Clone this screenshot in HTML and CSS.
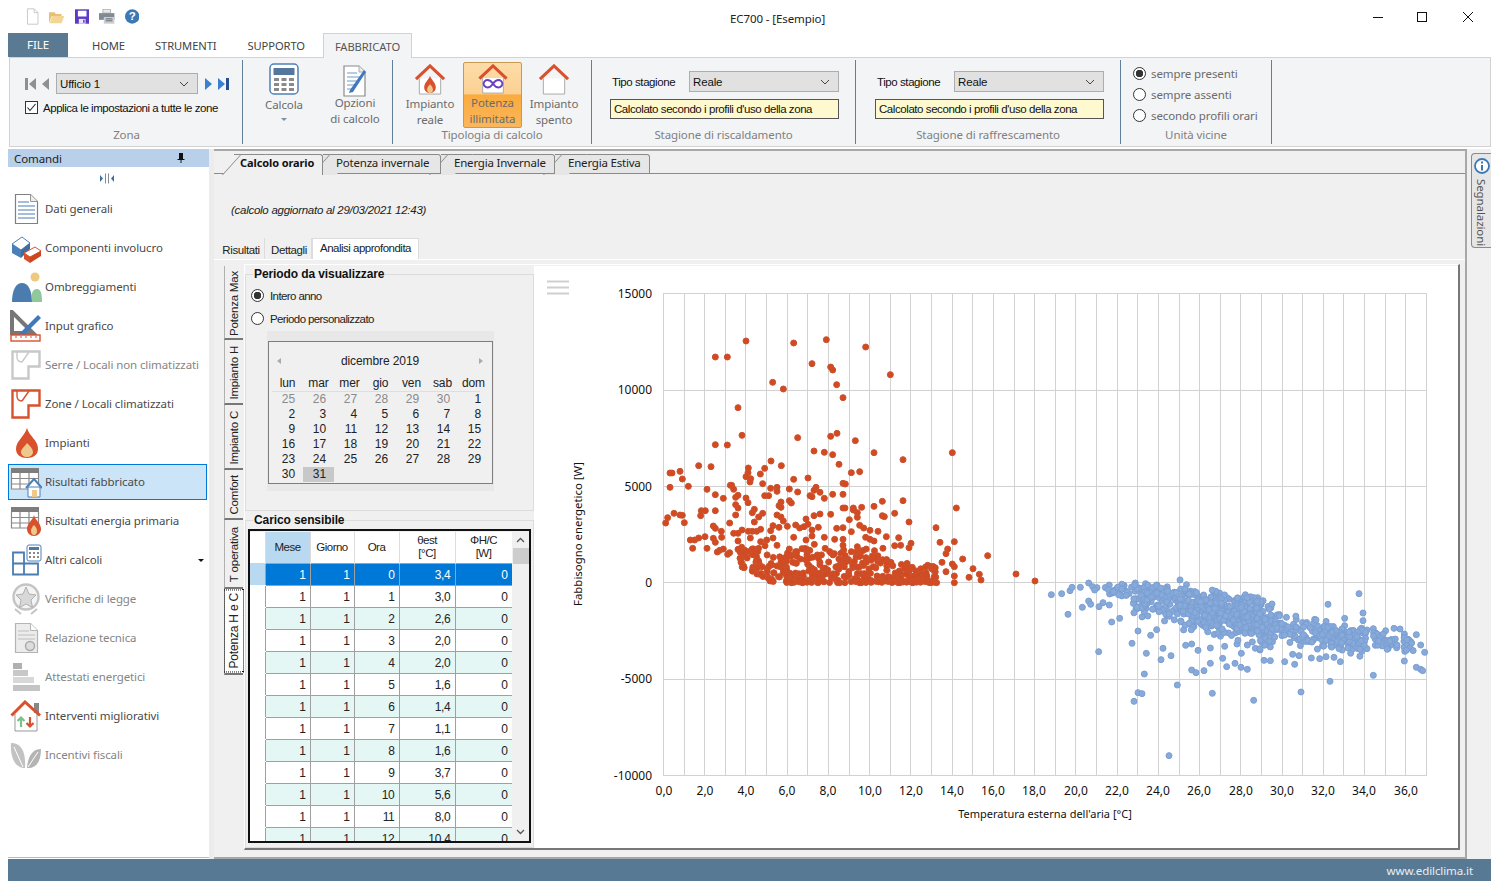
FILE: index.html
```html
<!DOCTYPE html>
<html lang="it">
<head>
<meta charset="utf-8">
<title>EC700 - [Esempio]</title>
<link rel="stylesheet" href="styles.css">
</head>
<body>
<svg class="defs" width="0" height="0" aria-hidden="true">
  <defs>
    <symbol id="i-house" viewBox="0 0 32 32">
      <path d="M5 15v16h22V15" fill="#fff" stroke="#a8a8a8" stroke-width="1"/>
      <path d="M1.500 15.500 16 2l14.500 13.500" fill="none" stroke="#d9502c" stroke-width="3.200"/>
    </symbol>
    <symbol id="i-plan" viewBox="0 0 30 30">
      <path d="M1.500 1.500h27v15h-11v12h-16z" fill="none" stroke="currentColor" stroke-width="2.400"/>
      <path d="M6 2v5c0 3 2 5 5 5h0M11 12 18 2" fill="none" stroke="currentColor" stroke-width="1.400"/>
    </symbol>
    <symbol id="i-table" viewBox="0 0 30 24">
      <rect x="1" y="1" width="28" height="5" fill="#7d7d7d"/>
      <path d="M1.500 6v16h27V6M1.500 11.500h27M1.500 17h27M10 6v16M19 6v16" fill="#fff" stroke="#8a8a8a" stroke-width="1.200"/>
    </symbol>
  </defs>
</svg>
<div class="app">
  <header class="titlebar">
    <div class="qat">
      <svg class="qat-icon" width="14" height="17" viewBox="0 0 14 17"><path d="M1.500 .5h7l4 4v12h-11z" fill="#fff" stroke="#c8c8c8"/><path d="M8.500 .5v4h4" fill="none" stroke="#c8c8c8"/></svg>
      <svg class="qat-icon" width="16" height="14" viewBox="0 0 16 14"><path d="M0 2h6l1 2h6v2H3L0 13z" fill="#e9bf73"/><path d="M3.500 6H16l-3 7.500H.5z" fill="#f3d595"/></svg>
      <svg class="qat-icon" width="15" height="15" viewBox="0 0 15 15"><path d="M0 0h15v15H0z" fill="#5b3bc4"/><path d="M3 1.500h9v6H3z" fill="#fff"/><path d="M4 10h7v5H4z" fill="#e9e6f7"/><path d="M8.500 11h1.500v3H8.500z" fill="#5b3bc4"/></svg>
      <svg class="qat-icon" width="16" height="15" viewBox="0 0 16 15"><path d="M4 0h8v4H4z" fill="#e8e8e8" stroke="#888" stroke-width=".6"/><path d="M0 4h16v7H0z" fill="#7f8a94"/><path d="M5 8h11v7H5z" fill="#c9ced3"/><path d="M7 10h7M7 12h7" stroke="#666" stroke-width="1"/></svg>
      <svg class="qat-icon" width="15" height="15" viewBox="0 0 15 15"><circle cx="7.500" cy="7.500" r="7.500" fill="#3c79b4"/><text x="7.500" y="11.600" text-anchor="middle" class="qat-help">?</text></svg>
    </div>
    <div class="app-title">EC700 - [Esempio]</div>
    <div class="winctl">
      <svg width="12" height="12" viewBox="0 0 12 12"><path d="M1 6.500h10" stroke="#111"/></svg>
      <svg width="12" height="12" viewBox="0 0 12 12"><rect x="1.500" y="1.500" width="9" height="9" fill="none" stroke="#111"/></svg>
      <svg class="win-close" width="12" height="12" viewBox="0 0 12 12"><path d="M1 1l10 10M11 1 1 11" stroke="#111"/></svg>
    </div>
  </header>

  <nav class="ribbon-tabs">
    <div class="file-tab">FILE</div>
    <div class="rtab rtab-home">HOME</div>
    <div class="rtab rtab-tools">STRUMENTI</div>
    <div class="rtab rtab-support">SUPPORTO</div>
    <div class="rtab rtab-active">FABBRICATO</div>
  </nav>

  <section class="ribbon">
    <div class="rgroup g-zona">
      <div class="rgroup-body zona-body">
        <div class="zona-row">
          <svg class="nav-l" width="26" height="12" viewBox="0 0 26 12"><path d="M0 0h3v12H0zM11 0v12L4 6zM24 0v12l-7-6z" fill="#909090"/></svg>
          <div class="combo combo-zona"><span>Ufficio 1</span><svg width="10" height="6" viewBox="0 0 10 6"><path d="M1 1l4 4 4-4" fill="none" stroke="#444"/></svg></div>
          <svg class="nav-r" width="25" height="12" viewBox="0 0 25 12"><path d="M1 0v12l7-6zM14 0v12l7-6z" fill="#3a7fd0"/><path d="M22 0h3v12h-3z" fill="#2a4f8f"/></svg>
        </div>
        <label class="apply-row">
          <svg width="13" height="13" viewBox="0 0 13 13"><rect x=".5" y=".5" width="12" height="12" fill="#fff" stroke="#333"/><path d="M2.500 6.500 5 9.500l5.500-6.500" fill="none" stroke="#222" stroke-width="1.100"/></svg>
          <span>Applica le impostazioni a tutte le zone</span>
        </label>
      </div>
      <div class="rgroup-label">Zona</div>
    </div>

    <div class="rgroup g-calc">
      <div class="rgroup-body calc-body">
        <div class="bigbtn btn-calcola">
          <svg width="30" height="32" viewBox="0 0 30 32"><rect x="1" y="1" width="28" height="30" rx="4" fill="#fff" stroke="#4f80b8" stroke-width="1.500"/><rect x="4.500" y="5" width="21" height="7" fill="#53789c"/><path d="M5 15h5v3H5zM12.500 15h5v3h-5zM20 15h5v3h-5zM5 20h5v3H5zM12.500 20h5v3h-5zM20 20h5v3h-5zM5 25h5v3H5zM12.500 25h5v3h-5zM20 25h5v3h-5z" fill="#8a8a8a"/></svg>
          <span class="btn-text">Calcola</span>
          <span class="caret"></span>
        </div>
        <div class="bigbtn btn-opzioni">
          <svg width="24" height="32" viewBox="0 0 24 32"><path d="M1 1h15l6 6v24H1z" fill="#fff" stroke="#8a8a8a" stroke-width="1.200"/><path d="M16 1v6h6" fill="#eee" stroke="#aaa"/><path d="M4 8h10M4 12h14M4 16h12M4 20h9M4 24h6" stroke="#6f9bd1" stroke-width="1.200"/><path d="M7 25 21 5l2 2-13 20-4 1z" fill="#3e79bf"/></svg>
          <span class="btn-text">Opzioni<br>di calcolo</span>
        </div>
      </div>
    </div>

    <div class="rgroup g-tipo">
      <div class="rgroup-body tipo-body">
        <div class="housebtn">
          <svg width="32" height="32" viewBox="0 0 32 32"><use href="#i-house"/><path d="M16 12c1 4 6 7 6 12 0 4-3 6-6 6s-6-2-6-6c0-5 5-8 6-12z" fill="#d9502c"/><path d="M16 21c2 2 3 4 3 5.500S18 30 16 30s-3-2-3-3.500S14 23 16 21z" fill="#efc88d"/></svg>
          <span class="btn-text">Impianto<br>reale</span>
        </div>
        <div class="housebtn housebtn-on">
          <svg width="32" height="32" viewBox="0 0 32 32"><use href="#i-house"/><path d="M16 21c-2-3-4-4-6-4s-4 2-4 4 2 4 4 4 4-1 6-4c2 3 4 4 6 4s4-2 4-4-2-4-4-4-4 1-6 4z" fill="none" stroke="#6a3fc4" stroke-width="2"/></svg>
          <span class="btn-text">Potenza<br>illimitata</span>
        </div>
        <div class="housebtn">
          <svg width="32" height="32" viewBox="0 0 32 32"><use href="#i-house"/></svg>
          <span class="btn-text">Impianto<br>spento</span>
        </div>
      </div>
      <div class="rgroup-label">Tipologia di calcolo</div>
    </div>

    <div class="rgroup g-risc">
      <div class="rgroup-body season-body">
        <div class="season-row">
          <span class="season-name">Tipo stagione</span>
          <div class="combo combo-season"><span>Reale</span><svg width="10" height="6" viewBox="0 0 10 6"><path d="M1 1l4 4 4-4" fill="none" stroke="#444"/></svg></div>
        </div>
        <div class="note">Calcolato secondo i profili d'uso della zona</div>
      </div>
      <div class="rgroup-label">Stagione di riscaldamento</div>
    </div>

    <div class="rgroup g-raff">
      <div class="rgroup-body season-body">
        <div class="season-row">
          <span class="season-name">Tipo stagione</span>
          <div class="combo combo-season"><span>Reale</span><svg width="10" height="6" viewBox="0 0 10 6"><path d="M1 1l4 4 4-4" fill="none" stroke="#444"/></svg></div>
        </div>
        <div class="note">Calcolato secondo i profili d'uso della zona</div>
      </div>
      <div class="rgroup-label">Stagione di raffrescamento</div>
    </div>

    <div class="rgroup g-unita">
      <div class="rgroup-body unita-body">
        <div class="rradio"><span class="radio radio-on"></span>sempre presenti</div>
        <div class="rradio"><span class="radio"></span>sempre assenti</div>
        <div class="rradio"><span class="radio"></span>secondo profili orari</div>
      </div>
      <div class="rgroup-label">Unità vicine</div>
    </div>
  </section>

  <div class="workspace">
    <aside class="sidebar">
      <div class="side-head"><span>Comandi</span>
        <svg width="8" height="10" viewBox="0 0 8 10"><path d="M2 0h4v6h1.500v1H4.500v3h-1V7H.5V6H2z" fill="#111"/></svg>
      </div>
      <div class="side-split"><svg width="16" height="11" viewBox="0 0 16 11"><path d="M1 2v7l3-3.500zM15 2v7l-3-3.500z" fill="#3f6f9f"/><path d="M6.500 .5v10M9.500 .5v10" stroke="#7d8d9d"/></svg></div>
      <ul class="side-list">
        <li class="side-item"><svg class="side-icon" width="32" height="32" viewBox="0 0 32 32"><path d="M5.500 1.500h15l7 7v22h-22z" fill="#fff" stroke="#808080" stroke-width="1.200"/><path d="M20.500 1.500v7h7" fill="#eee" stroke="#999"/><path d="M8 9h11M8 13h17M8 17h17M8 21h17M8 25h17" stroke="#4b7cb5" stroke-width="1.100"/></svg><span>Dati generali</span></li>
        <li class="side-item"><svg class="side-icon" width="32" height="32" viewBox="0 0 32 32"><path d="M2 12 12 5l8 6-9 7z" fill="#fff" stroke="#4f7fb4" stroke-width="1"/><path d="M2 12l9 6v8l-9-5z" fill="#4a7fb8"/><path d="M11 18l9-7v6l-9 9z" fill="#3f6d9f"/><path d="M14 21l11-6 6 4-11 6z" fill="#fff" stroke="#d9502c"/><path d="M14 21l6 4v6l-6-4z" fill="#d9502c"/><path d="M20 25l11-6v5l-11 7z" fill="#c9461f"/></svg><span>Componenti involucro</span></li>
        <li class="side-item"><svg class="side-icon" width="32" height="32" viewBox="0 0 32 32"><circle cx="25" cy="6" r="4.500" fill="#efc97f"/><path d="M2 31c0-12 4-19 10-19s10 7 10 19z" fill="#4a7cb0"/><path d="M22 31c-1-8 0-13 5-13 4 0 5 5 5 13z" fill="#8fc89a"/></svg><span>Ombreggiamenti</span></li>
        <li class="side-item"><svg class="side-icon" width="32" height="32" viewBox="0 0 32 32"><path d="M2 2v21h21z" fill="none" stroke="#777" stroke-width="4"/><path d="M10 23 28 5l3 3-17 17-6 2z" fill="#3f78bd"/><rect x="1" y="25" width="29" height="6" fill="#fff" stroke="#d9502c" stroke-width="1.400"/><path d="M6 26v2M11 26v2M16 26v2M21 26v2M26 26v2" stroke="#d9502c"/></svg><span>Input grafico</span></li>
        <li class="side-item side-off"><svg class="side-icon icon-plan-off" width="30" height="30"><use href="#i-plan"/></svg><span>Serre / Locali non climatizzati</span></li>
        <li class="side-item"><svg class="side-icon icon-plan-on" width="30" height="30"><use href="#i-plan"/></svg><span>Zone / Locali climatizzati</span></li>
        <li class="side-item"><svg class="side-icon" width="32" height="32" viewBox="0 0 32 32"><path d="M17 1c2 8 11 12 11 21 0 6-5 9-11 9S6 28 6 22c0-8 8-12 11-21z" fill="#d9502c"/><path d="M17 16c3 3 6 6 6 9s-3 5-6 5-6-2-6-5 4-6 6-9z" fill="#efc88d"/></svg><span>Impianti</span></li>
        <li class="side-item side-selected"><svg class="side-icon" width="32" height="32" viewBox="0 0 32 32"><svg width="30" height="24" y="1"><use href="#i-table"/></svg><path d="M16 22 24 13l8 9" fill="#fff" stroke="#4a7fb8" stroke-width="2"/><path d="M18 21h12v10H18z" fill="#fff" stroke="#4a7fb8"/><path d="M22 24h5v7h-5z" fill="#efc88d"/></svg><span>Risultati fabbricato</span></li>
        <li class="side-item"><svg class="side-icon" width="32" height="32" viewBox="0 0 32 32"><svg width="30" height="24" y="1"><use href="#i-table"/></svg><path d="M24 10c1 5 7 8 7 14 0 4-3 7-7 7s-7-3-7-7c0-6 6-9 7-14z" fill="#d9502c"/><path d="M24 20c2 2 3 4 3 6s-1 4-3 4-3-2-3-4 1-4 3-6z" fill="#efc88d"/></svg><span>Risultati energia primaria</span></li>
        <li class="side-item"><svg class="side-icon" width="32" height="32" viewBox="0 0 32 32"><path d="M3 8.500h11v11H3zM14.500 8.500h0M3 19.500h11v11H3zM14 19.500h14v11H14z" fill="#fff" stroke="#4a7cb0" stroke-width="1.800"/><rect x="17" y="1" width="14" height="16" rx="2" fill="#fff" stroke="#4f80b8"/><rect x="19" y="3" width="10" height="3" fill="#53789c"/><path d="M19 8h2v2h-2zM23 8h2v2h-2zM27 8h2v2h-2zM19 12h2v2h-2zM23 12h2v2h-2zM27 12h2v2h-2z" fill="#888"/></svg><span>Altri calcoli</span><span class="side-caret"></span></li>
        <li class="side-item side-off"><svg class="side-icon" width="32" height="32" viewBox="0 0 32 32"><circle cx="16" cy="14" r="12.500" fill="#f4f4f4" stroke="#c4c4c4" stroke-width="2.400"/><path d="m16 4 3 7 7 1-5 5 1.500 7.500L16 21l-6.500 3.500L11 17l-5-5 7-1z" fill="#d8d8d8" stroke="#b0b0b0"/><path d="M5 26l6 5M27 26l-6 5" stroke="#c4c4c4" stroke-width="2"/></svg><span>Verifiche di legge</span></li>
        <li class="side-item side-off"><svg class="side-icon" width="32" height="32" viewBox="0 0 32 32"><path d="M5.500 1.500h15l7 7v22h-22z" fill="#ececec" stroke="#b4b4b4" stroke-width="1.200"/><path d="M20.500 1.500v7h7" fill="#fff" stroke="#b4b4b4"/><path d="M8 9h11M8 13h17M8 17h17" stroke="#bdbdbd"/><circle cx="20" cy="24" r="4.500" fill="#ddd" stroke="#aaa" stroke-width="1.500"/></svg><span>Relazione tecnica</span></li>
        <li class="side-item side-off"><svg class="side-icon" width="32" height="32" viewBox="0 0 32 32"><path d="M3 2h9v6H3z" fill="#b0b0b0"/><path d="M3 9h15v6H3z" fill="#c8c8c8"/><path d="M3 16h21v6H3z" fill="#d8d8d8"/><path d="M3 24h27v6H3z" fill="#c4c4c4"/></svg><span>Attestati energetici</span></li>
        <li class="side-item"><svg class="side-icon" width="32" height="32" viewBox="0 0 32 32"><path d="M24 3h5v10h-5z" fill="#888"/><path d="M5 14v17h22V14" fill="#fff" stroke="#999"/><path d="M1.500 15.500 15 2l15 13.500" fill="none" stroke="#d9502c" stroke-width="3"/><path d="M11 27V18M7.500 21l3.500-3.500 3.500 3.500" fill="none" stroke="#7fc08a" stroke-width="2.200"/><path d="M20 17v9M16.500 23l3.500 3.500 3.500-3.500" fill="none" stroke="#d9502c" stroke-width="2.200"/></svg><span>Interventi migliorativi</span></li>
        <li class="side-item side-off"><svg class="side-icon" width="32" height="32" viewBox="0 0 32 32"><path d="M1 4c10 0 15 8 14 25C7 29 0 22 1 4z" fill="#c2c2c2"/><path d="M31 10c-7 0-13 5-14 19 8 1 14-5 14-19z" fill="#b4b4b4"/><path d="M4 8l9 20M28 13 18 28" stroke="#fff"/></svg><span>Incentivi fiscali</span></li>
      </ul>
    </aside>
    <div class="gutter"></div>

    <main class="main">
      <div class="doc-tabs">
        <div class="doc-tab doc-tab-on doc-a">Calcolo orario</div>
        <div class="doc-tab doc-b">Potenza invernale</div>
        <div class="doc-tab doc-c">Energia Invernale</div>
        <div class="doc-tab doc-d">Energia Estiva</div>
      </div>
      <div class="stamp"><em>(calcolo aggiornato al 29/03/2021 12:43)</em></div>
      <div class="sub-tabs">
        <div class="sub-tab sub-a">Risultati</div>
        <div class="sub-tab sub-b">Dettagli</div>
        <div class="sub-tab sub-on">Analisi approfondita</div>
      </div>
      <div class="sub-page">
        <div class="vtabs">
          <div class="vtab vt-1"><span>Potenza Max</span></div>
          <div class="vtab vt-2"><span>Impianto H</span></div>
          <div class="vtab vt-3"><span>Impianto C</span></div>
          <div class="vtab vt-4"><span>Comfort</span></div>
          <div class="vtab vt-5"><span>T operativa</span></div>
          <div class="vtab vtab-on vt-6"><span>Potenza H e C</span></div>
        </div>
        <div class="frame">
          <div class="controls">
            <fieldset class="gbox gbox-period">
              <legend>Periodo da visualizzare</legend>
              <div class="fradio fradio-a"><span class="radio radio-on"></span>Intero anno</div>
              <div class="fradio fradio-b"><span class="radio"></span>Periodo personalizzato</div>
              <div class="cal-wrap">
                <div class="calendar">
                  <div class="cal-head"><span class="cal-prev"></span><span>dicembre 2019</span><span class="cal-next"></span></div>
                  <div class="cal-grid cal-names"><span>lun</span><span>mar</span><span>mer</span><span>gio</span><span>ven</span><span>sab</span><span>dom</span></div>
                  <div class="cal-grid cal-days">
                    <span class="dim">25</span><span class="dim">26</span><span class="dim">27</span><span class="dim">28</span><span class="dim">29</span><span class="dim">30</span><span>1</span>
                    <span>2</span><span>3</span><span>4</span><span>5</span><span>6</span><span>7</span><span>8</span>
                    <span>9</span><span>10</span><span>11</span><span>12</span><span>13</span><span>14</span><span>15</span>
                    <span>16</span><span>17</span><span>18</span><span>19</span><span>20</span><span>21</span><span>22</span>
                    <span>23</span><span>24</span><span>25</span><span>26</span><span>27</span><span>28</span><span>29</span>
                    <span>30</span><span class="today">31</span>
                  </div>
                </div>
              </div>
            </fieldset>
            <fieldset class="gbox gbox-load">
              <legend>Carico sensibile</legend>
              <div class="datagrid">
                <div class="grid-clip">
                  <table class="gtable">
                    <colgroup><col class="c0"><col class="c1"><col class="c2"><col class="c3"><col class="c4"><col class="c5"></colgroup>
                    <thead><tr><th class="rowhead"></th><th class="th-on">Mese</th><th>Giorno</th><th>Ora</th><th>θest<br>[°C]</th><th>ΦH/C<br>[W]</th></tr></thead>
                    <tbody>
                      <tr class="sel"><td class="rowhead"></td><td>1</td><td>1</td><td>0</td><td>3,4</td><td>0</td></tr>
                      <tr><td class="rowhead"></td><td>1</td><td>1</td><td>1</td><td>3,0</td><td>0</td></tr>
                      <tr class="alt"><td class="rowhead"></td><td>1</td><td>1</td><td>2</td><td>2,6</td><td>0</td></tr>
                      <tr><td class="rowhead"></td><td>1</td><td>1</td><td>3</td><td>2,0</td><td>0</td></tr>
                      <tr class="alt"><td class="rowhead"></td><td>1</td><td>1</td><td>4</td><td>2,0</td><td>0</td></tr>
                      <tr><td class="rowhead"></td><td>1</td><td>1</td><td>5</td><td>1,6</td><td>0</td></tr>
                      <tr class="alt"><td class="rowhead"></td><td>1</td><td>1</td><td>6</td><td>1,4</td><td>0</td></tr>
                      <tr><td class="rowhead"></td><td>1</td><td>1</td><td>7</td><td>1,1</td><td>0</td></tr>
                      <tr class="alt"><td class="rowhead"></td><td>1</td><td>1</td><td>8</td><td>1,6</td><td>0</td></tr>
                      <tr><td class="rowhead"></td><td>1</td><td>1</td><td>9</td><td>3,7</td><td>0</td></tr>
                      <tr class="alt"><td class="rowhead"></td><td>1</td><td>1</td><td>10</td><td>5,6</td><td>0</td></tr>
                      <tr><td class="rowhead"></td><td>1</td><td>1</td><td>11</td><td>8,0</td><td>0</td></tr>
                      <tr class="alt"><td class="rowhead"></td><td>1</td><td>1</td><td>12</td><td>10,4</td><td>0</td></tr>
                    </tbody>
                  </table>
                </div>
                <div class="gscroll">
                  <svg width="9" height="6" viewBox="0 0 9 6"><path d="M1 5l3.500-3.500L8 5" fill="none" stroke="#555" stroke-width="1.300"/></svg>
                  <div class="gthumb"></div>
                  <svg class="gdown" width="9" height="6" viewBox="0 0 9 6"><path d="M1 1l3.500 3.500L8 1" fill="none" stroke="#555" stroke-width="1.300"/></svg>
                </div>
              </div>
            </fieldset>
          </div>
          <div class="chart-wrap">
            <svg id="chart" class="chart" width="923" height="580" viewBox="534 266 923 580">
              <path d="M547 281.500h22M547 287.500h22M547 293.500h22" stroke="#cfcfcf" stroke-width="2"/>
              <g id="grid"></g>
              <g class="ylabels">
                <text x="652" y="298">15000</text><text x="652" y="394">10000</text><text x="652" y="491">5000</text><text x="652" y="587">0</text><text x="652" y="683">-5000</text><text x="652" y="780">-10000</text>
              </g>
              <g class="xlabels">
                <text x="664" y="795">0,0</text><text x="705" y="795">2,0</text><text x="746" y="795">4,0</text><text x="787" y="795">6,0</text><text x="828" y="795">8,0</text><text x="870" y="795">10,0</text><text x="911" y="795">12,0</text><text x="952" y="795">14,0</text><text x="993" y="795">16,0</text><text x="1034" y="795">18,0</text><text x="1076" y="795">20,0</text><text x="1117" y="795">22,0</text><text x="1158" y="795">24,0</text><text x="1199" y="795">26,0</text><text x="1241" y="795">28,0</text><text x="1282" y="795">30,0</text><text x="1323" y="795">32,0</text><text x="1364" y="795">34,0</text><text x="1406" y="795">36,0</text>
              </g>
              <text class="axis-title axis-y" transform="translate(582 534) rotate(-90)">Fabbisogno energetico [W]</text>
              <text class="axis-title axis-x" x="1045" y="818">Temperatura esterna dell'aria [°C]</text>
              <g id="dots"></g>
            </svg>
          </div>
        </div>
      </div>
    </main>

    <aside class="rail">
      <div class="rail-tab">
        <svg width="16" height="16" viewBox="0 0 16 16"><circle cx="8" cy="8" r="7" fill="#fff" stroke="#3c79b4" stroke-width="1.800"/><path d="M8 3.500v2M8 7v5.500" stroke="#3c79b4" stroke-width="2"/></svg>
        <span class="rail-text">Segnalazioni</span>
      </div>
    </aside>
  </div>

  <footer class="statusbar">www.edilclima.it</footer>
</div>
<script src="chart.js"></script>
</body>
</html>
```

FILE: styles.css
```css
* { box-sizing: border-box; }
html, body { margin: 0; padding: 0; }
body {
  width: 1499px;
  height: 889px;
  background: #fff;
  overflow: hidden;
  font-family: "Noto Sans", "Liberation Sans", sans-serif;
  font-size: 11.500px;
  letter-spacing: -.1px;
  color: #222;
}
.defs { position: absolute; }
.app { width: 1499px; height: 889px; padding: 0 8px 8px; display: flex; flex-direction: column; }

/* title bar */
.titlebar { height: 33px; flex: none; display: flex; align-items: center; }
.qat { display: flex; align-items: center; gap: 10px; padding-left: 18px; width: 131px; }
.qat-help { font: bold 12px "Liberation Sans", sans-serif; fill: #fff; }
.app-title { margin: 3px 0 0 591px; color: #222; }
.winctl { margin-left: auto; display: flex; gap: 32px; padding-right: 17px; }
.win-close { margin-left: 2px; }

/* ribbon tabs */
.ribbon-tabs { height: 24px; flex: none; display: flex; align-items: stretch; }
.file-tab { width: 60px; background: #5a7a94; color: #fff; text-align: center; line-height: 23px; font-size: 11.500px; border-bottom: 1px solid #5a7a94; }
.rtab { line-height: 25px; font-size: 11.200px; color: #444; }
.rtab-home { margin-left: 24px; }
.rtab-tools { margin-left: 30px; }
.rtab-support { margin-left: 31px; }
.rtab-active { margin-left: 18px; width: 89px; text-align: center; background: #f3f4f6; border: 1px solid #d2d2d2; border-bottom: 0; color: #555; margin-bottom: -1px; z-index: 1; }

/* ribbon */
.ribbon { height: 90px; flex: none; margin-left: 1px; display: flex; padding: 2px 0 2px 1px; background: #f3f4f6; border: 1px solid #d2d2d2; }
.rgroup { display: flex; flex-direction: column; height: 84px; border-right: 1px solid #5f7f9b; }
.rgroup-body { flex: 1; min-height: 0; }
.rgroup-label { height: 17px; line-height: 15px; text-align: center; color: #808080; }
.g-zona { width: 232px; }
.g-calc { width: 150px; }
.g-tipo { width: 199px; }
.g-risc { width: 264px; }
.g-raff { width: 265px; }
.g-unita { width: 151px; }

.zona-body { padding: 13px 0 0 14px; }
.zona-row { display: flex; align-items: center; height: 21px; }
.nav-l { margin-right: 5px; }
.nav-r { margin-left: 6px; }
.combo { height: 21px; background: #e1e1e1; border: 1px solid #adadad; display: flex; align-items: center; justify-content: space-between; padding: 0 8px 0 3px; color: #111; font: 11.500px "Liberation Sans", sans-serif; letter-spacing: -.15px; }
.combo-zona { width: 142px; }
.combo-season { width: 150px; }
.apply-row { display: flex; align-items: center; gap: 5px; margin: 7px 0 0; color: #111; font: 11.500px "Liberation Sans", sans-serif; letter-spacing: -.45px; }

.calc-body { display: flex; }
.bigbtn { display: flex; flex-direction: column; align-items: center; color: #666; }
.btn-text { line-height: 16px; text-align: center; color: #6b6b6b; }
.btn-calcola { width: 38px; margin-left: 22px; padding-top: 3px; }
.btn-calcola .btn-text { margin-top: 2px; }
.caret { width: 0; height: 0; margin-top: 5px; border: 3px solid transparent; border-top: 3px solid #7f8fa0; }
.btn-opzioni { margin-left: 17px; width: 70px; padding-top: 5px; }
.btn-opzioni svg { margin-bottom: -2px; }

.tipo-body { display: flex; padding-left: 7px; }
.housebtn { width: 60px; margin-right: 2px; height: 66px; margin-top: 2px; padding-top: 2px; display: flex; flex-direction: column; align-items: center; }
.housebtn-on { width: 59px; margin-left: 1px; border: 1px solid #c89a4f; border-radius: 2px; background: linear-gradient(#fddca8 0, #fcd193 48%, #f9ab3e 50%, #fbb65a 100%); padding-top: 1px; }
.housebtn .btn-text { margin-top: 1px; }

.season-body { padding: 11px 0 0 18px; }
.g-raff .season-body { padding-left: 19px; }
.season-row { display: flex; align-items: center; justify-content: space-between; width: 229px; }
.season-name { margin-left: 2px; color: #111; font: 11.500px "Liberation Sans", sans-serif; letter-spacing: -.42px; }
.note { width: 229px; height: 20px; margin-top: 7px; background: #fff9cf; border: 1px solid #555; padding-left: 3px; color: #111; font: 11.500px/19px "Liberation Sans", sans-serif; letter-spacing: -.43px; white-space: nowrap; }

.unita-body { padding: 3px 0 0 12px; }
.rradio { display: flex; align-items: center; gap: 5px; height: 21px; color: #6b6b6b; }
.radio { display: inline-block; width: 13px; height: 13px; border: 1px solid #333; border-radius: 50%; background: #fff; flex: none; }
.radio-on { background: radial-gradient(circle, #333 0 3.500px, #fff 4px); }

/* workspace */
.workspace { flex: 1; min-height: 0; display: flex; margin-top: 2px; }
.sidebar { width: 201px; flex: none; background: #fff; border-bottom: 1px solid #b0bccb; margin-bottom: 1px; }
.gutter { width: 5px; flex: none; background: #ececec; }
.side-head { height: 18px; background: #b8d0ea; padding: 0 24px 0 6px; display: flex; align-items: center; justify-content: space-between; color: #222; }
.side-split { height: 22px; display: flex; align-items: center; justify-content: center; padding-right: 4px; }
.side-list { list-style: none; margin: 0; padding: 0; }
.side-item { height: 39px; display: flex; align-items: center; padding-left: 2px; color: #4a4a4a; position: relative; white-space: nowrap; }
.side-icon { width: 32px; height: 32px; flex: none; margin-right: 3px; }
.side-off { color: #858585; }
.side-selected { height: 36px; margin: 1.500px 2px 1.500px 0; padding-left: 1px; background: #cce4f7; border: 1px solid #0078d7; }
.icon-plan-off { color: #c8c8c8; width: 30px; height: 30px; margin: 0 4px 0 1px; }
.icon-plan-on { color: #d9502c; width: 30px; height: 30px; margin: 0 4px 0 1px; }
.side-caret { position: absolute; right: 5px; top: 19px; border: 3px solid transparent; border-top: 3px solid #111; }

/* main */
.main { width: 1253px; flex: none; border: solid #a8a8a8; border-width: 2px 2px 2px 0; background: #f0f0f0; display: flex; flex-direction: column; }
.doc-tabs { height: 23px; flex: none; display: flex; border-bottom: 1px solid #8a8a8a; padding: 3px 0 0 20px; }
.doc-tab { height: 20px; position: relative; padding-left: 13px; background: #e6e6e6; border: 1px solid #8a8a8a; border-left: 0; border-radius: 0 3px 0 0; line-height: 16px; color: #222; white-space: nowrap; letter-spacing: -.2px; }
.doc-tab::before { content: ""; position: absolute; left: -12px; top: -1px; width: 24px; height: 20px; background: inherit; border-left: 1px solid #8a8a8a; border-top: 1px solid #8a8a8a; transform: skewX(-42deg); transform-origin: bottom left; z-index: -1; }
.doc-tab-on { background: #f0f0f0; font-weight: 700; height: 21px; color: #111; border-bottom: 0; }
.doc-a { width: 89px; padding-left: 6px; z-index: 4; font-size: 11px; letter-spacing: -.1px; }
.doc-b { width: 118px; z-index: 3; }
.doc-c { width: 114px; z-index: 2; }
.doc-d { width: 95px; z-index: 1; }

.stamp { height: 64px; flex: none; padding: 8px 0 0 17px; display: flex; align-items: center; font: 11.500px "Liberation Sans", sans-serif; letter-spacing: -.27px; color: #222; }
.sub-tabs { height: 21px; flex: none; display: flex; padding-left: 4px; font: 11.500px "Liberation Sans", sans-serif; letter-spacing: -.4px; color: #222; }
.sub-tab { width: 47px; border-right: 1px solid #dcdcdc; text-align: center; line-height: 24px; }
.sub-b { padding-left: 2px; }
.sub-on { width: 107px; background: #fff; border: 1px solid #dcdcdc; border-bottom: 0; line-height: 19px; letter-spacing: -.5px; }
.sub-page { flex: 1; min-height: 0; display: flex; padding: 4px 0 5px 10px; align-items: flex-start; border-top: 1px solid #fff; }
.vtabs { width: 20px; flex: none; display: flex; flex-direction: column; padding-top: 2px; }
.vtab { width: 19px; display: flex; align-items: center; justify-content: center; padding-top: 2px; background: #f0f0f0; border-left: 1px solid #b0b0b0; border-bottom: 2px solid #777; font: 11.500px "Liberation Sans", sans-serif; letter-spacing: -.2px; color: #222; }
.vtab span { writing-mode: vertical-rl; transform: rotate(180deg); white-space: nowrap; }
.vt-1 { height: 74px; }
.vt-2 { height: 65px; }
.vt-3 { height: 65px; }
.vt-4 { height: 50px; }
.vt-5 { height: 69px; }
.vt-6 { height: 86px; padding-top: 0; background: #fff; font-size: 12px; }
.vtab-on span { outline: 1px dotted #111; padding: 3px 2px; }

.frame { width: 1216px; height: 586px; flex: none; display: flex; border-style: solid; border-color: #fff #777 #777 #fff; border-width: 1px 2px 2px 1px; background: #f0f0f0; }
.controls { width: 289px; flex: none; padding: 2px 0 0; display: flex; flex-direction: column; }
.gbox { margin: 0; border: 1px solid #dcdcdc; min-inline-size: 0; color: #222; font: 11.500px "Liberation Sans", sans-serif; letter-spacing: -.6px; }
.gbox legend { font-weight: 700; padding: 0 1px; color: #111; font-size: 12px; margin-left: 2px; letter-spacing: -.1px; }
.gbox-period { height: 244px; padding: 0 0 0 5px; }
.gbox-load { flex: 1; min-height: 0; padding: 2px 0 0 2px; margin-top: 2px; }
.gbox-load legend { margin-left: 5px; }
.fradio { display: flex; align-items: center; gap: 6px; height: 23px; }
.fradio-a { margin-top: 3px; }
.cal-wrap { width: 227px; height: 160px; margin: 1px 0 0 16px; background: #e8e8e8; padding: 10px 1px 0; }
.calendar { width: 225px; height: 143px; border: 1px solid #7d7d7d; background: #f0f0f0; padding: 0 3px; color: #222; font-size: 12px; letter-spacing: -.1px; }
.cal-head { height: 34px; display: flex; align-items: center; justify-content: space-between; padding: 3px 6px 0 5px; }
.cal-prev { border: 3px solid transparent; border-right: 4px solid #aaa; border-left: 0; }
.cal-next { border: 3px solid transparent; border-left: 4px solid #aaa; border-right: 0; }
.cal-grid { display: grid; grid-template-columns: repeat(7, 31px); }
.cal-names { height: 16px; line-height: 14px; text-align: center; border-bottom: 1px solid #dedede; width: 208px; }
.cal-days { grid-auto-rows: 15px; line-height: 15px; text-align: right; }
.cal-days span { padding-right: 8px; }
.cal-days .dim { color: #8a8a8a; }
.cal-days .today { background: #c8c8c8; }

.datagrid { width: 283px; height: 314px; display: flex; border: 2px solid #111; background: #f0f0f0; }
.grid-clip { width: 262px; height: 310px; overflow: hidden; padding-top: 1px; }
.gtable { width: 262px; table-layout: fixed; border-collapse: collapse; background: #fff; font: 12px "Liberation Sans", sans-serif; letter-spacing: -.3px; color: #222; }
.c0 { width: 15px; } .c1 { width: 45px; } .c2 { width: 44px; } .c3 { width: 45px; } .c4 { width: 56px; } .c5 { width: 57px; }
.gtable th { height: 31px; font-weight: 400; text-align: center; border-right: 1px solid #dcdcdc; line-height: 13px; padding: 0; background: #fff; font-size: 11.500px; letter-spacing: -.5px; }
.gtable .th-on { background: #b9d9f0; }
.gtable td { height: 22px; padding: 1px 4px 0 0; text-align: right; border: 1px solid #a0a0a0; line-height: 14px; }
.gtable td.rowhead { background: #fff; border: 0; border-bottom: 1px solid #fff; }
.gtable tr.alt td { background: #e4f7f5; }
.gtable tr.alt td.rowhead { background: #fff; }
.gtable tr.sel td { background: #0078d7; color: #fff; }
.gtable tr.sel td.rowhead { background: #b9d9f0; }
.gscroll { width: 17px; flex: none; display: flex; flex-direction: column; align-items: center; background: #f0f0f0; padding-top: 6px; }
.gthumb { width: 16px; height: 16px; background: #cdcdcd; margin-top: 5px; }
.gdown { margin-top: auto; margin-bottom: 6px; }

.chart-wrap { flex: 1; min-width: 0; background: #fff; margin-top: 1px; }
.chart { display: block; font: 12px "Noto Sans", sans-serif; letter-spacing: 0; fill: #111; }
.ylabels text { text-anchor: end; }
.xlabels text { text-anchor: middle; }
.axis-title { text-anchor: middle; }
.axis-y { font-size: 11.400px; }
.axis-x { font-size: 11px; }

/* right rail */
.rail { flex: 1; background: #f0f0f0; padding: 4px 0 0 4px; }
.rail-tab { width: 20px; height: 95px; background: #e6e6e6; border: 1px solid #8a8a8a; border-right: 0; border-radius: 4px 0 0 4px; display: flex; flex-direction: column; align-items: center; padding-top: 4px; }
.rail-text { writing-mode: vertical-rl; margin-top: 5px; color: #555; }

.statusbar { height: 22px; flex: none; background: #587994; color: #e8eef3; text-align: right; line-height: 23px; padding-right: 18px; }
```

FILE: chart.js
```js
(function () {
  var NS = "http://www.w3.org/2000/svg";
  var grid = document.getElementById("grid");
  var dots = document.getElementById("dots");
  function add(parent, tag, attrs) {
    var el = document.createElementNS(NS, tag);
    for (var k in attrs) el.setAttribute(k, attrs[k]);
    parent.appendChild(el);
  }
  var x0 = 663.5, xEnd = 1426.5, step = 20.62;
  [293.5, 390.5, 486.5, 582.5, 679.5, 775.5].forEach(function (y) {
    add(grid, "line", { x1: x0, x2: xEnd, y1: y, y2: y, stroke: "#d2d2d2" });
  });
  for (var i = 0; i <= 37; i++) {
    var x = Math.round(x0 + i * step - 0.5) + 0.5;
    add(grid, "line", { x1: x, x2: x, y1: 293, y2: 776, stroke: "#d2d2d2" });
  }

  var seed = 12345;
  function rnd() {
    seed = (seed * 1664525 + 1013904223) % 4294967296;
    return seed / 4294967296;
  }

  // coordinates read off the picture at 3x, origin (540,270)
  var red = [[618,213],[526,261],[562,261],[761,219],[859,209],[977,231],[816,281],[872,291],[878,300],[1051,314],[698,337],[730,357],[890,344],[909,383],[594,413],[606,496],[526,524],[562,525],[773,503],[872,499],[891,490],[946,512],[822,543],[853,547],[878,554],[1002,548],[1237,548],[1089,569],[693,573],[724,587],[476,587],[513,590],[625,594],[674,595],[897,583],[390,609],[396,609],[420,604],[427,627],[445,649],[390,652],[501,658],[661,612],[624,608],[618,620],[632,626],[630,636],[668,641],[571,646],[575,646],[581,658],[761,628],[804,624],[934,608],[959,605],[909,640],[916,642],[526,674],[550,685],[587,682],[594,676],[618,684],[624,698],[692,655],[711,652],[711,664],[748,657],[773,666],[674,677],[686,677],[828,652],[822,661],[840,667],[810,677],[816,680],[853,685],[878,673],[909,673],[1027,694],[1089,692],[723,696],[717,707],[723,712],[748,692],[754,699],[587,704],[594,714],[1002,709],[909,714],[915,714],[940,714],[965,712],[1249,714],[940,720],[484,722],[496,722],[526,722],[402,730],[420,735],[427,736],[383,743],[377,759],[433,758],[482,737],[643,718],[637,728],[668,730],[656,741],[643,756],[569,759],[587,735],[711,735],[723,741],[730,753],[742,769],[822,737],[840,732],[872,733],[798,747],[952,728],[952,742],[928,749],[1027,737],[1033,740],[1064,730],[1107,756],[520,768],[526,775],[544,784],[581,790],[594,790],[606,780],[625,784],[637,784],[650,784],[662,778],[699,767],[692,782],[717,772],[767,765],[779,774],[792,770],[804,763],[816,780],[835,772],[890,775],[909,773],[959,766],[971,774],[990,781],[1014,784],[934,785],[1188,773],[1200,817],[1243,815],[1076,803],[1039,800],[1113,820],[1107,833],[1064,827],[1082,826],[451,810],[464,810],[476,804],[495,800],[520,805],[526,817],[545,802],[594,813],[631,804],[662,815],[680,810],[699,804],[761,802],[798,810],[816,798],[853,802],[884,808],[909,808],[977,802],[990,808],[1002,813],[458,835],[501,835],[532,846],[539,841],[550,837],[563,853],[569,848],[594,838],[600,846],[625,845],[643,852],[656,835],[675,827],[711,826],[748,837],[767,845],[786,836],[823,823],[909,826],[952,830],[934,845],[1223,837],[1218,851],[1343,857],[1268,867],[1206,877],[1237,882],[1243,890],[1163,886],[1170,889],[1299,896],[1218,905],[1138,904],[1318,913],[1243,918],[1287,922],[1323,930],[1243,938],[1428,912],[1485,933]];
  for (var r = 0; r < 340; r++) {
    var u = rnd();
    var rx = 600 + Math.pow(u, 1.15) * 590;
    var spread = rx < 760 ? 90 : (rx > 1040 ? 65 : 105);
    var b = rnd();
    var ry = 938 - Math.pow(b, 1.7) * spread - (rx < 700 ? (700 - rx) * 0.5 : 0);
    red.push([rx, ry]);
  }
  red.forEach(function (p) {
    add(dots, "circle", { cx: 540 + p[0] / 3, cy: 270 + p[1] / 3, r: 3, fill: "#d4491f", stroke: "#c9532f", "stroke-width": 1 });
  });

  // origin (1020,540)
  var blue = [[94,164],[125,161],[150,152],[156,142],[181,142],[206,129],[218,140],[231,143],[224,150],[206,183],[187,202],[144,223],[212,193],[237,200],[249,188],[268,195],[275,246],[299,235],[236,335],[336,310],[354,273],[379,340],[373,402],[354,458],[366,461],[342,484],[447,647],[472,435],[577,460],[701,481],[843,456],[930,424],[1060,406],[1017,161],[924,193],[974,235],[974,257],[1029,219],[1029,242],[713,173],[423,359],[429,325],[453,347],[392,286],[410,269],[515,390],[528,398],[552,392],[571,370],[608,355],[620,380],[645,370],[663,382],[682,388],[732,361],[751,362],[794,365],[824,373],[497,316],[515,312],[534,331],[571,324],[614,319],[651,312],[682,315],[664,340],[706,325],[720,330],[738,313],[818,343],[837,347],[874,354],[899,356],[918,350],[942,352],[961,365],[1189,284],[1202,315],[1214,337],[1153,363],[1189,382],[1202,388],[1208,392],[1041,326],[1066,316],[1041,270],[1060,266],[1097,272],[1122,265],[1140,267],[1153,282]];
  function cluster(n, xa, xb, fn, sp) {
    for (var c = 0; c < n; c++) {
      var cx = xa + rnd() * (xb - xa);
      blue.push([cx, fn(cx) + (rnd() + rnd() - 1) * sp]);
    }
  }
  cluster(32, 255, 340, function () { return 150; }, 22);
  cluster(120, 340, 480, function (v) { return 178 + (v - 340) * 0.08; }, 65);
  cluster(400, 480, 760, function (v) { return 190 + (v - 480) * 0.24; }, 80);
  cluster(190, 750, 1040, function (v) { return 262 + (v - 750) * 0.16; }, 50);
  cluster(42, 1060, 1180, function (v) { return 295 + (v - 1060) * 0.2; }, 30);
  blue.forEach(function (p) {
    add(dots, "circle", { cx: 1020 + p[0] / 3, cy: 540 + p[1] / 3, r: 3, fill: "#88aadb", stroke: "#7a9fd2", "stroke-width": 1 });
  });
})();
```
